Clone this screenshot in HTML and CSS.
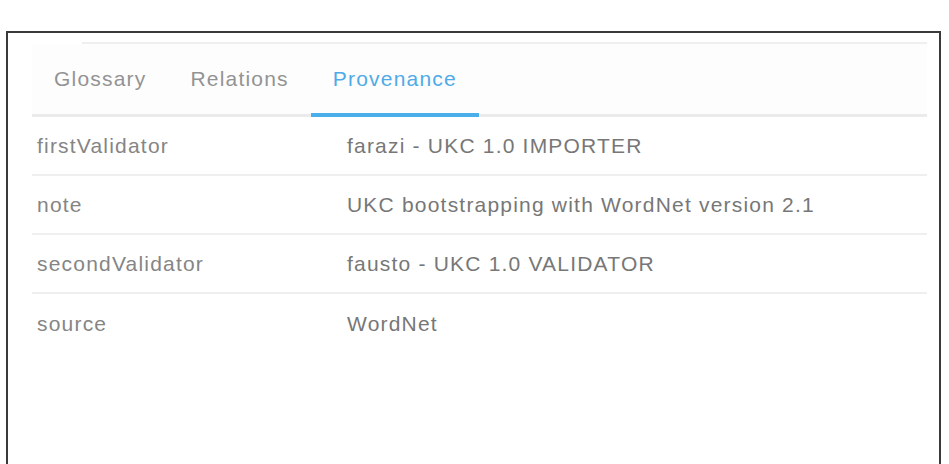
FILE: index.html
```html
<!DOCTYPE html>
<html lang="en">
<head>
    <meta charset="UTF-8">
    <meta name="viewport" content="width=device-width, initial-scale=1.0">
    <title>Provenance</title>
    <link rel="stylesheet" href="styles.css">
</head>
<body>
    <div class="frame">
        <div class="top-line"></div>
        <div class="tabs">
            <div class="tab">Glossary</div>
            <div class="tab">Relations</div>
            <div class="tab active">Provenance</div>
        </div>
        <div class="rows">
            <div class="row">
                <div class="key">firstValidator</div>
                <div class="value">farazi - UKC 1.0 IMPORTER</div>
            </div>
            <div class="row">
                <div class="key">note</div>
                <div class="value">UKC bootstrapping with WordNet version 2.1</div>
            </div>
            <div class="row">
                <div class="key">secondValidator</div>
                <div class="value">fausto - UKC 1.0 VALIDATOR</div>
            </div>
            <div class="row last">
                <div class="key">source</div>
                <div class="value">WordNet</div>
            </div>
        </div>
    </div>
</body>
</html>
```

FILE: styles.css
```css
* {
    box-sizing: border-box;
}
body {
    margin: 0;
    background-color: #ffffff;
    font-family: 'Liberation Sans', Arial, sans-serif;
    overflow: hidden;
}
.frame {
    margin: 31px 0 0 6px;
    width: 935px;
    height: 433px;
    border: 2px solid #3a3a3a;
    border-bottom: none;
    padding: 9px 12px 0 24px;
}
.top-line {
    margin-left: 50px;
    height: 2px;
    background-color: #efefef;
}
.tabs {
    display: flex;
    border-bottom: 3px solid #ebebeb;
    background-color: #fdfdfd;
}
.tab {
    height: 73px;
    padding: 0 22px;
    display: flex;
    align-items: center;
    font-size: 21px;
    letter-spacing: 1.2px;
    color: #939393;
    border-bottom: 4px solid transparent;
    margin-bottom: -3px;
}
.tab.active {
    color: #4fabe8;
    border-bottom-color: #4aaeea;
}
.row {
    display: grid;
    grid-template-columns: 315px 1fr;
    align-items: center;
    height: 59px;
    border-bottom: 2px solid #efefef;
    font-size: 21px;
    letter-spacing: 1.2px;
    color: #858585;
}
.row.last {
    border-bottom: none;
}
.key {
    padding-left: 5px;
}
.value {
    color: #777777;
}
```
